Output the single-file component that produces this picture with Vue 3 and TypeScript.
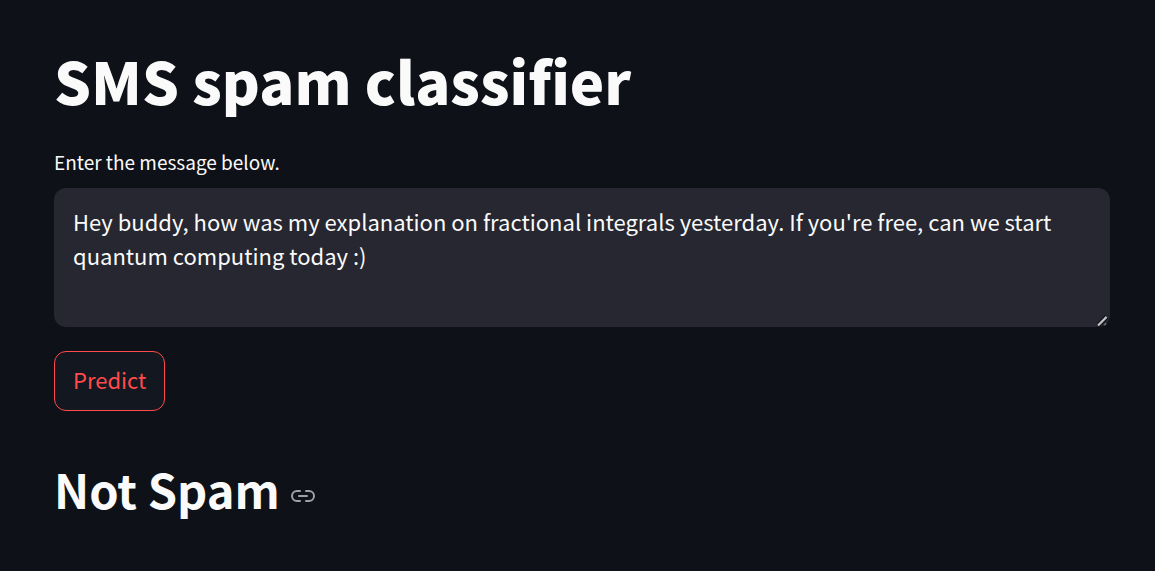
<script setup lang="ts">
import { ref } from 'vue'

const message = ref(
  "Hey buddy, how was my explanation on fractional integrals yesterday. If you're free, can we start quantum computing today :)"
)
const result = ref('Not Spam')

function predict(): void {
  result.value = /\b(win|winner|free entry|prize|claim|cash)\b/i.test(message.value) ? 'Spam' : 'Not Spam'
}
</script>

<template>
  <main class="app">
    <h1 class="title">SMS spam classifier</h1>
    <form class="form" @submit.prevent="predict">
      <label class="label" for="message">Enter the message below.</label>
      <div class="field">
        <textarea id="message" v-model="message" class="input" spellcheck="false"></textarea>
        <svg class="grip" viewBox="0 0 12 12" aria-hidden="true">
          <path d="M.8 10.7 9.8 1.7" stroke="#0e1117" stroke-width="4.6" />
          <path d="M1 10.5 9.6 1.9" stroke="#c4c4c6" stroke-width="2.2" />
          <path d="M7.2 10.2 9.2 8.2" stroke="#77777c" stroke-width="1.6" />
        </svg>
      </div>
      <button class="predict" type="submit">Predict</button>
    </form>
    <h2 id="result" class="result">
      <span>{{ result }}</span>
      <a class="anchor" href="#result" aria-label="Link to result">
        <svg viewBox="0 0 24 24" fill="none" stroke="currentColor" stroke-width="2" stroke-linecap="round" stroke-linejoin="round" aria-hidden="true">
          <path d="M15 7h3a5 5 0 0 1 0 10h-3m-6 0H6A5 5 0 0 1 6 7h3" />
          <path d="M8 12h8" />
        </svg>
      </a>
    </h2>
  </main>
</template>

<style>
html,
body {
  background: #0e1117;
}
</style>

<style scoped>
.app {
  box-sizing: border-box;
  min-height: 100vh;
  padding: 44px 45px 40px 54px;
  color: #fafafa;
  font-family: "Source Sans Pro", "Noto Sans CJK JP", "Noto Sans", sans-serif;
}

.title {
  margin: 0;
  font-size: 58px;
  font-weight: 900;
  line-height: 72px;
}

.form {
  display: flex;
  flex-direction: column;
  align-items: flex-start;
  margin-top: 30px;
}

.label {
  font-size: 19px;
  line-height: 32px;
}

.field {
  position: relative;
  display: flex;
  width: 100%;
  margin-top: 10px;
}

.input {
  box-sizing: border-box;
  width: 100%;
  height: 139px;
  padding: 16px 19px;
  border: 0;
  border-radius: 12px;
  outline: 0;
  resize: none;
  background: #262730;
  color: #fafafa;
  font-family: inherit;
  font-size: 22px;
  line-height: 34px;
}

.grip {
  position: absolute;
  right: 1px;
  bottom: 0;
  width: 12px;
  height: 12px;
}

.predict {
  height: 60px;
  margin-top: 24px;
  padding: 0 18px 4px;
  border: 1px solid #ff4b4b;
  border-radius: 12px;
  background: #131720;
  color: #ff4b4b;
  font-family: inherit;
  font-size: 22px;
  line-height: 36px;
  cursor: pointer;
}

.result {
  display: flex;
  align-items: center;
  gap: 11px;
  margin: 45px 0 0;
  font-size: 47px;
  font-weight: 600;
  line-height: 66px;
}

.anchor {
  display: flex;
  margin-top: 14px;
  color: #a0a1a4;
}

.anchor svg {
  width: 24px;
  height: 24px;
}
</style>
